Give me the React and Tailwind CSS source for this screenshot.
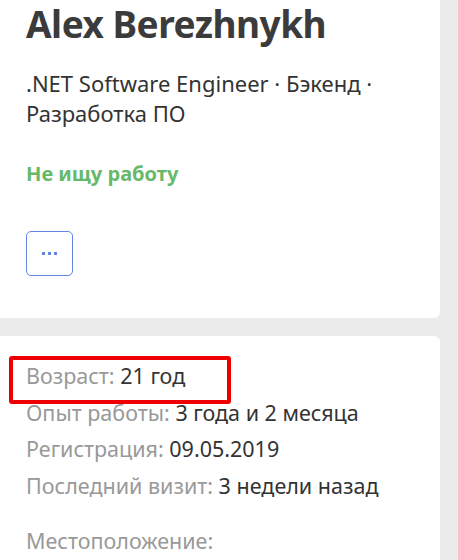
export default function App() {
  const font = { fontFamily: '"Noto Sans", "Open Sans", sans-serif' };
  return (
    <div className="w-[458px] h-[560px] overflow-hidden bg-[#ececec]" style={font}>
      <div className="w-[440px] bg-white rounded-br-[6px] pl-[26px] h-[318px]">
        <h1 className="text-[37px] leading-[48px] font-bold text-[#3b3b3b] tracking-[-0.5px]">Alex Berezhnykh</h1>
        <p className="mt-[20px] text-[22px] leading-[30px] text-[#333] w-[400px]">
          .NET Software Engineer · Бэкенд · Разработка ПО
        </p>
        <p className="mt-[31px] text-[20px] leading-[30px] font-bold text-[#67b96a]">Не ищу работу</p>
        <button className="mt-[42px] w-[47px] h-[45px] rounded-[5px] border border-[#6385e4] flex items-center justify-center gap-[3px]">
          <span className="w-[3px] h-[3px] bg-[#6385e4]" />
          <span className="w-[3px] h-[3px] bg-[#6385e4]" />
          <span className="w-[3px] h-[3px] bg-[#6385e4]" />
        </button>
      </div>
      <div className="relative mt-[18px] w-[440px] h-[300px] bg-white rounded-tr-[6px] pl-[26px] pt-[22px] text-[21.5px] leading-[36.7px]">
        <div className="absolute left-[9px] top-[20px] w-[222px] h-[48px] border-[4px] border-[#ee0000] rounded-[3px]" />
        <p><span className="text-[#999]">Возраст:</span> <span className="text-[#333]">21 год</span></p>
        <p><span className="text-[#999]">Опыт работы:</span> <span className="text-[#333]">3 года и 2 месяца</span></p>
        <p><span className="text-[#999]">Регистрация:</span> <span className="text-[#333]">09.05.2019</span></p>
        <p><span className="text-[#999]">Последний визит:</span> <span className="text-[#333]">3 недели назад</span></p>
        <p className="mt-[18px] text-[#999]">Местоположение:</p>
      </div>
    </div>
  );
}
